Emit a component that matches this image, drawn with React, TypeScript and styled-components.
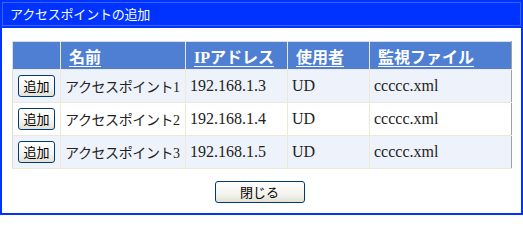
import styled, { createGlobalStyle } from "styled-components";

const GlobalStyle = createGlobalStyle`
  html, body {
    margin: 0;
    padding: 0;
    background: #ffffff;
  }
`;

const Dialog = styled.div`
  box-sizing: border-box;
  width: 523px;
  height: 215px;
  border: 2px solid #0033ff;
  border-top: none;
  background: #ffffff;
  display: flex;
  flex-direction: column;
  overflow: hidden;
`;

const TitleBar = styled.div`
  box-sizing: border-box;
  height: 28px;
  margin: 0 -2px;
  background: #0033ff;
  border: 2px solid #0033ff;
  outline: 1px solid #3a62ff;
  outline-offset: -3px;
  color: #ffffff;
  font-family: "Noto Sans CJK JP", sans-serif;
  font-size: 13px;
  line-height: 24px;
  padding-left: 8px;
  letter-spacing: -0.2px;
`;

const Body = styled.div`
  padding: 13px 10px 0 10px;
  display: flex;
  flex-direction: column;
  align-items: flex-start;
`;

const Table = styled.table`
  box-sizing: border-box;
  border-collapse: collapse;
  width: 499px;
  table-layout: fixed;
  border-top: 1px solid #dcdcdc;
  border-left: 1px solid #dcdcdc;
  border-bottom: 1px solid #a0a0a0;
  border-right: 1px solid #a0a0a0;
`;

const Col = styled.col<{ $w: number }>`
  width: ${(p) => p.$w}px;
`;

const HeadCell = styled.th`
  height: 27px;
  padding: 0 0 0 8px;
  background: #4f7fd2;
  border: 1px solid #ece9d8;
  border-top: none;
  text-align: left;
  color: #ffffff;
  font-family: "Liberation Serif", "Noto Sans CJK JP", serif;
  font-size: 16px;
  font-weight: bold;
  text-decoration: underline;
  text-underline-offset: 3px;
  white-space: nowrap;
  overflow: hidden;
  &:first-child {
    border-left: none;
  }
  &:last-child {
    border-right: none;
  }
`;

const Row = styled.tr<{ $alt: boolean }>`
  background: ${(p) => (p.$alt ? "#eef3fb" : "#ffffff")};
`;

const Cell = styled.td`
  height: 32px;
  padding: 0 0 0 4px;
  border: 1px solid #ece9d8;
  color: #222222;
  font-family: "Liberation Serif", "Noto Sans CJK JP", serif;
  font-size: 16px;
  white-space: nowrap;
  overflow: hidden;
  &:first-child {
    border-left: none;
    padding-left: 5px;
  }
  &:last-child {
    border-right: none;
  }
`;

const NameText = styled.span`
  font-size: 14px;
  letter-spacing: -0.4px;
`;

const Button = styled.button<{ $w: number }>`
  box-sizing: border-box;
  width: ${(p) => p.$w}px;
  height: 22px;
  padding: 0;
  border: 1px solid #003c74;
  border-radius: 3px;
  background: linear-gradient(#ffffff 0%, #f4f3ee 60%, #e3e1d6 100%);
  font-family: "Noto Sans CJK JP", sans-serif;
  font-size: 13px;
  line-height: 20px;
  color: #000000;
  cursor: pointer;
`;

const Footer = styled.div`
  align-self: stretch;
  display: flex;
  justify-content: center;
  padding-top: 12px;
  padding-right: 4px;
`;

const rows = [
  { name: "アクセスポイント1", ip: "192.168.1.3" },
  { name: "アクセスポイント2", ip: "192.168.1.4" },
  { name: "アクセスポイント3", ip: "192.168.1.5" },
];

export default function App() {
  return (
    <>
      <GlobalStyle />
      <Dialog>
        <TitleBar>アクセスポイントの追加</TitleBar>
        <Body>
          <Table>
            <colgroup>
              <Col $w={48} />
              <Col $w={125} />
              <Col $w={102} />
              <Col $w={82} />
              <Col $w={142} />
            </colgroup>
            <thead>
              <tr>
                <HeadCell></HeadCell>
                <HeadCell>名前</HeadCell>
                <HeadCell>IPアドレス</HeadCell>
                <HeadCell>使用者</HeadCell>
                <HeadCell>監視ファイル</HeadCell>
              </tr>
            </thead>
            <tbody>
              {rows.map((r, i) => (
                <Row key={r.ip} $alt={i % 2 === 0}>
                  <Cell>
                    <Button $w={37}>追加</Button>
                  </Cell>
                  <Cell>
                    <NameText>{r.name}</NameText>
                  </Cell>
                  <Cell>{r.ip}</Cell>
                  <Cell>UD</Cell>
                  <Cell>ccccc.xml</Cell>
                </Row>
              ))}
            </tbody>
          </Table>
          <Footer>
            <Button $w={90}>閉じる</Button>
          </Footer>
        </Body>
      </Dialog>
    </>
  );
}
